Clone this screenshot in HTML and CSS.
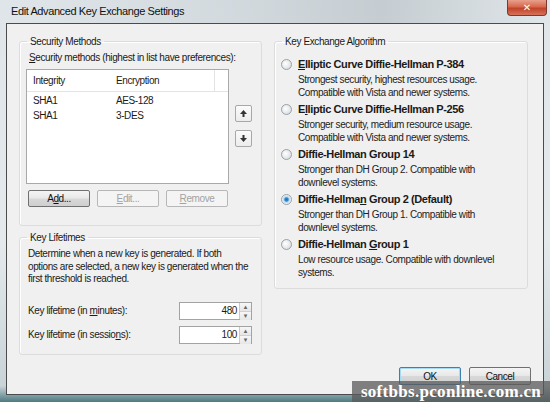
FILE: index.html
```html
<!DOCTYPE html>
<html>
<head>
<meta charset="utf-8">
<link rel="stylesheet" href="styles.css">
</head>
<body>
<div class="window">
  <div class="titlebar">
    <span class="title">Edit Advanced Key Exchange Settings</span>
    <span class="close">✕</span>
  </div>
  <div class="client">
    <div class="columns">
      <div class="left">
        <fieldset class="group group-methods">
          <legend>Security Methods</legend>
          <div class="caption"><u>S</u>ecurity methods (highest in list have preferences):</div>
          <div class="list-row">
            <div class="listview">
              <div class="lv-header">
                <span class="col1">Integrity</span>
                <span class="col2">Encryption</span>
              </div>
              <div class="lv-row"><span class="col1">SHA1</span><span class="col2">AES-128</span></div>
              <div class="lv-row"><span class="col1">SHA1</span><span class="col2">3-DES</span></div>
            </div>
            <div class="movers">
              <span class="mover">
                <svg width="9" height="9" viewBox="0 0 9 9"><path d="M4.5 1 L8 5 L5.5 5 L5.5 8 L3.5 8 L3.5 5 L1 5 Z" fill="#333"/></svg>
              </span>
              <span class="mover">
                <svg width="9" height="9" viewBox="0 0 9 9"><path d="M4.5 8 L8 4 L5.5 4 L5.5 1 L3.5 1 L3.5 4 L1 4 Z" fill="#333"/></svg>
              </span>
            </div>
          </div>
          <div class="btn-row">
            <span class="btn">A<u>d</u>d...</span>
            <span class="btn disabled"><u>E</u>dit...</span>
            <span class="btn disabled"><u>R</u>emove</span>
          </div>
        </fieldset>
        <fieldset class="group group-life">
          <legend>Key Lifetimes</legend>
          <p class="desc">Determine when a new key is generated. If both<br>options are selected, a new key is generated when the<br>first threshold is reached.</p>
          <div class="field">
            <span class="field-label">Key lifetime (in <u>m</u>inutes):</span>
            <span class="spin"><span class="spin-value">480</span><span class="spin-btns"><span class="sb">▴</span><span class="sb">▾</span></span></span>
          </div>
          <div class="field">
            <span class="field-label">Key lifetime (in sessio<u>n</u>s):</span>
            <span class="spin"><span class="spin-value">100</span><span class="spin-btns"><span class="sb">▴</span><span class="sb">▾</span></span></span>
          </div>
        </fieldset>
      </div>
      <div class="right">
        <fieldset class="group group-algo">
          <legend>Key Exchange Algorithm</legend>
          <div class="option">
            <span class="radio"></span>
            <div class="opt-text">
              <div class="opt-title"><u>E</u>lliptic Curve Diffie-Hellman P-384</div>
              <div class="opt-desc">Strongest security, highest resources usage.<br>Compatible with Vista and newer systems.</div>
            </div>
          </div>
          <div class="option">
            <span class="radio"></span>
            <div class="opt-text">
              <div class="opt-title">E<u>l</u>liptic Curve Diffie-Hellman P-256</div>
              <div class="opt-desc">Stronger security, medium resource usage.<br>Compatible with Vista and newer systems.</div>
            </div>
          </div>
          <div class="option">
            <span class="radio"></span>
            <div class="opt-text">
              <div class="opt-title">Diffie-Hellman Group 14</div>
              <div class="opt-desc">Stronger than DH Group 2. Compatible with<br>downlevel systems.</div>
            </div>
          </div>
          <div class="option">
            <span class="radio checked"></span>
            <div class="opt-text">
              <div class="opt-title">Diffie-Hellma<u>n</u> Group 2 (Default)</div>
              <div class="opt-desc">Stronger than DH Group 1. Compatible with<br>downlevel systems.</div>
            </div>
          </div>
          <div class="option">
            <span class="radio"></span>
            <div class="opt-text">
              <div class="opt-title">Diffie-Hellman <u>G</u>roup 1</div>
              <div class="opt-desc">Low resource usage. Compatible with downlevel<br>systems.</div>
            </div>
          </div>
        </fieldset>
      </div>
    </div>
    <div class="footer">
      <span class="btn btn-ok">OK</span>
      <span class="btn">Cancel</span>
    </div>
  </div>
  <div class="watermark">softbbs.pconline.com.cn</div>
</div>
</body>
</html>
```

FILE: styles.css
```css
html, body {
  margin: 0;
  padding: 0;
}
body {
  width: 550px;
  height: 402px;
  overflow: hidden;
  font-family: "Liberation Sans", Arial, sans-serif;
  font-size: 10px;
  letter-spacing: -0.4px;
  color: #1a1a1a;
}
.window {
  position: relative;
  width: 550px;
  height: 402px;
  box-sizing: border-box;
  background: linear-gradient(180deg, #dfe5e9 0%, #e4e9ec 60%, #c9d4d8 96%, #4d7a80 100%);
  display: flex;
  flex-direction: column;
  padding: 0 6px 7px 6px;
}
.titlebar {
  height: 23px;
  display: flex;
  align-items: flex-start;
  justify-content: space-between;
  background: linear-gradient(90deg, rgba(255,255,255,0) 0%, rgba(170,180,186,0.25) 45%, rgba(150,160,166,0.35) 70%, rgba(255,255,255,0) 100%);
}
.title {
  font-size: 11px;
  letter-spacing: -0.4px;
  color: #111;
  margin: 5px 0 0 5px;
}
.close {
  width: 40px;
  height: 16px;
  margin-right: -3px;
  border: 1px solid #7a3b2e;
  border-top: none;
  border-radius: 0 0 4px 4px;
  background: linear-gradient(180deg, #e9a08c 0%, #d7684d 45%, #c0432a 55%, #d6725a 100%);
  color: #fff;
  font-family: "DejaVu Sans", sans-serif;
  font-size: 10px;
  font-weight: bold;
  letter-spacing: 0;
  text-align: center;
  line-height: 15px;
  box-sizing: border-box;
}
.client {
  flex: 1;
  background: #f0f0f0;
  border: 1px solid #4b4b4b;
  display: flex;
  flex-direction: column;
  padding: 11px 0 0 12px;
}
.columns {
  display: flex;
  gap: 12px;
}
.left {
  width: 243px;
  display: flex;
  flex-direction: column;
  gap: 5px;
}
.right {
  width: 254px;
}
.group {
  margin: 0;
  min-width: 0;
  border: 1px solid #dcdcdc;
  border-radius: 3px;
  box-shadow: inset 1px 1px 0 #fff;
  padding: 0 6px 0 6px;
}
.group legend {
  padding: 0 3px;
  margin-left: 1px;
  line-height: 13px;
  color: #1a1a1a;
}
.group-methods {
  height: 191px;
  box-sizing: border-box;
}
.caption {
  margin: 4px 0 0 3px;
  line-height: 12px;
  white-space: nowrap;
}
.list-row {
  display: flex;
  gap: 6px;
  margin-top: 5px;
}
.listview {
  width: 203px;
  height: 115px;
  box-sizing: border-box;
  background: #fff;
  border: 1px solid #a9a9a9;
}
.lv-header {
  display: flex;
  height: 21px;
  align-items: center;
  border-bottom: 1px solid #e3e3e3;
}
.lv-header .col2 {
  width: 98px;
  border-right: 1px solid #e3e3e3;
  height: 21px;
  line-height: 21px;
}
.col1 {
  width: 83px;
  padding-left: 6px;
}
.col2 {
  width: 98px;
}
.lv-row {
  display: flex;
  height: 15px;
  line-height: 15px;
}
.lv-header + .lv-row {
  margin-top: 1px;
}
.movers {
  display: flex;
  flex-direction: column;
  gap: 8px;
  margin-top: 36px;
}
.mover {
  width: 17px;
  height: 17px;
  box-sizing: border-box;
  border: 1px solid #a8a8a8;
  border-radius: 2px;
  background: linear-gradient(180deg, #fbfbfb, #ececec);
  display: flex;
  align-items: center;
  justify-content: center;
}
.btn-row {
  display: flex;
  gap: 7px;
  margin: 6px 0 0 2px;
}
.btn {
  width: 62px;
  height: 17px;
  box-sizing: border-box;
  border: 1px solid #707070;
  border-radius: 2px;
  background: linear-gradient(180deg, #f4f4f4 0%, #e8e8e8 48%, #d8d8d8 52%, #cfcfcf 100%);
  display: flex;
  align-items: center;
  justify-content: center;
  color: #111;
}
.btn.disabled {
  border-color: #b7b7b7;
  background: #f4f4f4;
  color: #a3a3a3;
}
.group-life {
  height: 124px;
  box-sizing: border-box;
}
.desc {
  margin: 4px 0 0 2px;
  line-height: 12.5px;
  white-space: nowrap;
}
.field {
  display: flex;
  align-items: center;
  justify-content: space-between;
  margin: 0 3px 0 2px;
  height: 18px;
}
.desc + .field {
  margin-top: 16px;
}
.field + .field {
  margin-top: 6px;
}
.spin {
  display: flex;
  width: 73px;
  height: 18px;
  box-sizing: border-box;
  border: 1px solid #a3a3a3;
  background: #fff;
}
.spin-value {
  flex: 1;
  text-align: right;
  padding-right: 2px;
  line-height: 16px;
}
.spin-btns {
  display: flex;
  flex-direction: column;
  width: 11px;
  border-left: 1px solid #c9c9c9;
}
.sb {
  flex: 1;
  font-family: "DejaVu Sans", sans-serif;
  font-size: 7px;
  letter-spacing: 0;
  line-height: 8px;
  text-align: center;
  color: #666;
  background: linear-gradient(180deg, #f7f7f7, #e6e6e6);
}
.sb + .sb {
  border-top: 1px solid #d0d0d0;
}
.group-algo {
  height: 254px;
  box-sizing: border-box;
  padding: 0 6px 0 6px;
}
.option {
  display: flex;
  gap: 6px;
  margin-top: 9px;
}
.option + .option {
  margin-top: 3px;
}
.radio {
  width: 11px;
  height: 11px;
  margin-top: 2px;
  flex: none;
  box-sizing: border-box;
  border-radius: 50%;
  border: 1px solid #9aa1a6;
  background: radial-gradient(circle at 40% 40%, #ffffff 0%, #e3e6e8 60%, #cdd2d5 100%);
}
.radio.checked {
  background: radial-gradient(circle at 50% 50%, #1c6fb9 0%, #2b8ad6 25%, #bfd9ee 45%, #eef3f6 70%, #d6dde2 100%);
}
.opt-title {
  font-weight: bold;
  font-size: 11px;
  line-height: 14px;
  white-space: nowrap;
}
.opt-desc {
  margin-top: 3px;
  line-height: 12.5px;
  color: #222;
  white-space: nowrap;
}
.footer {
  display: flex;
  justify-content: flex-end;
  gap: 8px;
  margin-top: auto;
  padding: 0 12px 9px 0;
}
.footer .btn {
  width: 62px;
  height: 18px;
}
.btn-ok {
  border-color: #3c7fb1;
  box-shadow: inset 0 0 0 1px #a6dbf3;
}
.watermark {
  position: absolute;
  right: 0;
  bottom: 0;
  width: 198px;
  height: 21px;
  background: rgba(90, 90, 90, 0.75);
  color: #fff;
  font-family: "Liberation Serif", serif;
  font-weight: bold;
  font-size: 17px;
  line-height: 21px;
  text-align: center;
  letter-spacing: 0.3px;
}
```
